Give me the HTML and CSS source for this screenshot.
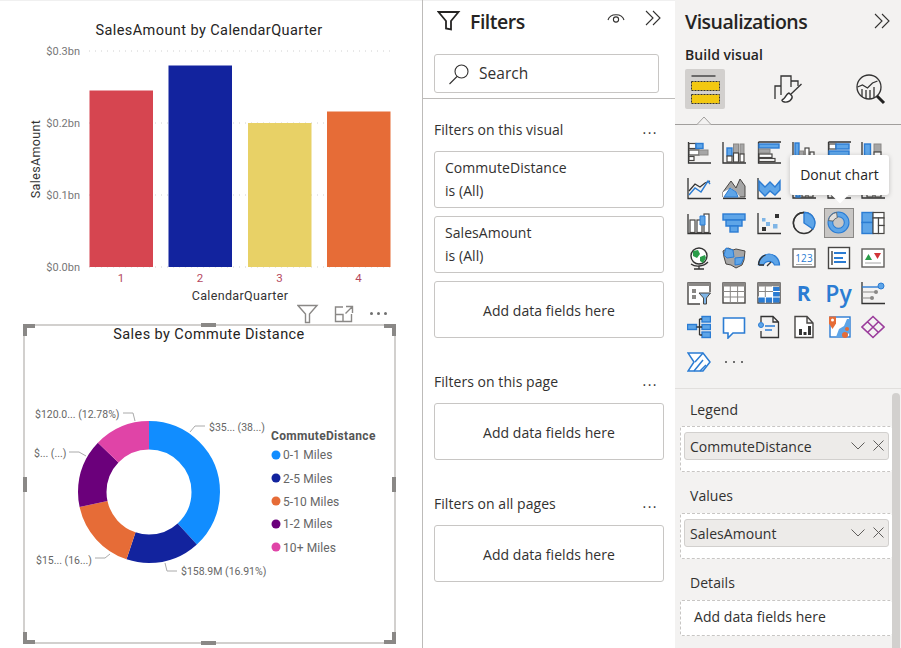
FILE: index.html
```html
<!DOCTYPE html>
<html lang="en">
<head>
    <meta charset="UTF-8">
    <title>Power BI report editor</title>
    <link rel="stylesheet" href="styles.css">
</head>
<body>
<div class="app">
    <!-- report canvas -->
    <div class="report">
        <svg class="chart-bar" viewBox="0 0 422 303" width="422" height="303">
            <text class="chart-title" x="209" y="35" text-anchor="middle">SalesAmount by CalendarQuarter</text>
            <line class="grid-line" x1="89" y1="51" x2="390" y2="51"/>
            <line class="grid-line" x1="89" y1="123" x2="390" y2="123"/>
            <line class="grid-line" x1="89" y1="195" x2="390" y2="195"/>
            <line class="grid-line" x1="89" y1="267" x2="390" y2="267"/>
            <text class="tick" x="80" y="55" text-anchor="end">$0.3bn</text>
            <text class="tick" x="80" y="127" text-anchor="end">$0.2bn</text>
            <text class="tick" x="80" y="199" text-anchor="end">$0.1bn</text>
            <text class="tick" x="80" y="271" text-anchor="end">$0.0bn</text>
            <rect x="89.5" y="90.5" width="63.5" height="176.5" fill="#d64550"/>
            <rect x="168.5" y="65.5" width="63.5" height="201.5" fill="#12239e"/>
            <rect x="248" y="123" width="63.5" height="144" fill="#e8d166"/>
            <rect x="327" y="111.5" width="63.5" height="155.5" fill="#e66c37"/>
            <text class="tick-x" x="121" y="282" text-anchor="middle">1</text>
            <text class="tick-x" x="200" y="282" text-anchor="middle">2</text>
            <text class="tick-x" x="279.5" y="282" text-anchor="middle">3</text>
            <text class="tick-x" x="358.5" y="282" text-anchor="middle">4</text>
            <text class="axis-title" x="240" y="300" text-anchor="middle">CalendarQuarter</text>
            <text class="axis-title" transform="translate(40 159) rotate(-90)" text-anchor="middle">SalesAmount</text>
        </svg>

        <div class="visual-tools">
            <svg width="22" height="20" viewBox="0 0 22 20"><path class="tool-line" d="M1 1.500h19l-7.500 8.500v8.500h-4V10z"/></svg>
            <svg width="20" height="18" viewBox="0 0 20 18"><path class="tool-line" d="M9 2H1.500v14.500h16V9M1.500 9.500H9v7M12 1.500h6.500V8M18.500 1.500L11.500 8.500"/></svg>
            <div class="tool-dots"><i></i><i></i><i></i></div>
        </div>

        <div class="visual">
            <svg class="chart-donut" viewBox="25 326 369 316" width="369" height="316">
                <text class="chart-title" x="209" y="339" text-anchor="middle">Sales by Commute Distance</text>
                <g transform="rotate(-90 149 492)" fill="none" stroke-width="28.5">
                    <circle cx="149" cy="492" r="56.75" pathLength="360" stroke="#118dff" stroke-dasharray="137.6 360"/>
                    <circle cx="149" cy="492" r="56.75" pathLength="360" stroke="#12239e" stroke-dasharray="60.9 360" stroke-dashoffset="-137.6"/>
                    <circle cx="149" cy="492" r="56.75" pathLength="360" stroke="#e66c37" stroke-dasharray="59.2 360" stroke-dashoffset="-198.5"/>
                    <circle cx="149" cy="492" r="56.75" pathLength="360" stroke="#6b007b" stroke-dasharray="56.3 360" stroke-dashoffset="-257.7"/>
                    <circle cx="149" cy="492" r="56.75" pathLength="360" stroke="#e044a7" stroke-dasharray="46 360" stroke-dashoffset="-314"/>
                </g>
                <path class="leader" d="M190 432l5-6h10M135 421l-2-8h-10M86 456l-7-4H69M110 554l-5 4H95M165 563l2 8h10"/>
                <text class="data-label" x="35" y="418">$120.0... (12.78%)</text>
                <text class="data-label" x="34" y="457">$... (...)</text>
                <text class="data-label" x="209" y="431">$35... (38...)</text>
                <text class="data-label" x="36" y="564">$15... (16...)</text>
                <text class="data-label" x="181" y="575">$158.9M (16.91%)</text>
                <text class="legend-title" x="271" y="440">CommuteDistance</text>
                <circle cx="276" cy="455" r="4.5" fill="#118dff"/>
                <text class="legend-item" x="283" y="459">0-1 Miles</text>
                <circle cx="276" cy="478" r="4.5" fill="#12239e"/>
                <text class="legend-item" x="283" y="483">2-5 Miles</text>
                <circle cx="276" cy="501" r="4.5" fill="#e66c37"/>
                <text class="legend-item" x="283" y="506">5-10 Miles</text>
                <circle cx="276" cy="524" r="4.5" fill="#6b007b"/>
                <text class="legend-item" x="283" y="528">1-2 Miles</text>
                <circle cx="276" cy="547" r="4.5" fill="#e044a7"/>
                <text class="legend-item" x="283" y="552">10+ Miles</text>
            </svg>
            <span class="handle corner tl"></span>
            <span class="handle corner tr"></span>
            <span class="handle corner bl"></span>
            <span class="handle corner br"></span>
            <span class="handle mid-h top"></span>
            <span class="handle mid-h bottom"></span>
            <span class="handle mid-v left"></span>
            <span class="handle mid-v right"></span>
        </div>
    </div>

    <!-- filters pane -->
    <div class="filters">
        <div class="filters-head">
            <svg width="24" height="24" viewBox="0 0 24 24"><path class="head-line" d="M1.500 3h20L14 12v8.500l-5-1V12z"/></svg>
            <h2>Filters</h2>
            <svg class="eye" width="18" height="14" viewBox="0 0 18 14"><path class="thin-line" d="M1 9c2-7 14-7 16 0"/><circle class="thin-line" cx="9" cy="8.500" r="2.600"/></svg>
            <svg class="chev" width="17" height="16" viewBox="0 0 17 16"><path class="thin-line" d="M1 1l7 7-7 7M8 1l7 7-7 7"/></svg>
        </div>
        <div class="search">
            <svg width="22" height="22" viewBox="0 0 22 22"><circle class="thin-line" cx="13.500" cy="8.500" r="6.500"/><path class="thin-line" d="M9 13.500L1.500 21"/></svg>
            <span>Search</span>
        </div>
        <div class="filters-rule"></div>

        <div class="section-head first"><span>Filters on this visual</span><span class="more">...</span></div>
        <div class="filter-card"><span>CommuteDistance</span><span>is (All)</span></div>
        <div class="filter-card"><span>SalesAmount</span><span>is (All)</span></div>
        <div class="filter-card add">Add data fields here</div>

        <div class="section-head"><span>Filters on this page</span><span class="more">...</span></div>
        <div class="filter-card add">Add data fields here</div>

        <div class="section-head"><span>Filters on all pages</span><span class="more">...</span></div>
        <div class="filter-card add">Add data fields here</div>
    </div>

    <!-- visualizations pane -->
    <div class="viz">
        <div class="viz-head">
            <h2>Visualizations</h2>
            <svg width="17" height="16" viewBox="0 0 17 16"><path class="thin-line" d="M1 1l7 7-7 7M8 1l7 7-7 7"/></svg>
        </div>
        <div class="build-label">Build visual</div>
        <div class="build-tabs">
            <div class="tab active">
                <svg width="32" height="32" viewBox="0 0 32 32">
                    <path class="dark" d="M2.500 3h24"/>
                    <rect x="2.500" y="8.500" width="28" height="9" fill="#f2c811" stroke="#333" stroke-dasharray="2 1"/>
                    <rect x="2.500" y="21.500" width="28" height="9" fill="#f2c811" stroke="#333" stroke-dasharray="2 1"/>
                </svg>
            </div>
            <div class="tab">
                <svg width="30" height="32" viewBox="0 0 30 32">
                    <path class="dark" d="M2 26V13h6v9M8 13V3h10v11M18 8h7v5"/>
                    <path class="dark" d="M28.500 11L17 22"/>
                    <path d="M16 20c-3 1-3 4-5 5.500s-3 2-1 3c5 2 10-2 9-5.500z" fill="#fff" stroke="#333" stroke-width="1.400"/>
                </svg>
            </div>
            <div class="tab">
                <svg width="32" height="32" viewBox="0 0 32 32">
                    <circle class="dark" cx="14" cy="14" r="12"/>
                    <path class="dark" d="M2.500 14l5-2 5 3 5-5 5-2M7 16v8M11 17v9M15 17v9M19 14v11"/>
                    <path d="M22 23l7 7" stroke="#222" stroke-width="3" fill="none"/>
                </svg>
            </div>
        </div>
        <div class="tabs-rule"><svg width="22" height="9" viewBox="0 0 22 9"><path d="M0 8.500h4l7-7.500 7 7.500h4" fill="#f3f2f1" stroke="#a19f9d"/></svg></div>

        <div class="viz-grid">
            <!-- row 1 -->
            <div class="cell"><svg viewBox="0 0 24 24"><path class="dark" d="M1.500 1v21H24"/><rect class="wht" x="2" y="2.500" width="7" height="5"/><rect class="blu" x="9" y="2.500" width="7" height="5"/><rect class="wht" x="2" y="9" width="10" height="5"/><rect class="gry" x="12" y="9" width="9" height="5"/><rect class="wht" x="2" y="15.500" width="5" height="4"/></svg></div>
            <div class="cell"><svg viewBox="0 0 24 24"><path class="dark" d="M1 1v21h23"/><rect class="blu" x="5" y="7" width="5" height="8"/><rect class="wht" x="5" y="15" width="5" height="6"/><rect class="gry" x="11.500" y="3" width="5" height="9"/><rect class="wht" x="11.500" y="12" width="5" height="9"/><rect class="gry" x="18" y="3" width="4" height="10"/><rect class="wht" x="18" y="13" width="4" height="8"/></svg></div>
            <div class="cell"><svg viewBox="0 0 24 24"><path class="dark" d="M1.500 1v21H24M1.500 1H24"/><rect class="blu" x="2" y="3" width="20" height="4"/><rect class="gry" x="2" y="8" width="11" height="4"/><rect class="wht" x="2" y="13" width="13" height="3.500"/><rect class="wht" x="2" y="17.500" width="16" height="3"/></svg></div>
            <div class="cell"><svg viewBox="0 0 24 24"><path class="dark" d="M1 1v21h23"/><rect class="blu" x="3" y="2" width="4" height="19"/><rect class="gry" x="7.500" y="10" width="4" height="11"/><rect class="wht" x="13" y="7" width="4" height="14"/><rect class="wht" x="18" y="11" width="4" height="10"/></svg></div>
            <div class="cell"><svg viewBox="0 0 24 24"><path class="dark" d="M1.500 1v21M1.500 1H24"/><rect class="wht" x="2" y="3" width="7" height="5"/><rect class="blu" x="9" y="3" width="13" height="5"/><rect class="blu" x="2" y="10" width="20" height="5"/></svg></div>
            <div class="cell"><svg viewBox="0 0 24 24"><path class="dark" d="M1 1v21h23"/><rect class="blu" x="3.500" y="3" width="6" height="18"/><rect class="gry" x="13" y="3" width="7" height="8"/><rect class="wht" x="13" y="11" width="7" height="10"/></svg></div>
            <!-- row 2 -->
            <div class="cell"><svg viewBox="0 0 24 24"><path class="dark" d="M1 2v20.500h23"/><path class="dark" d="M2 15l6-7 5 3 5-4 5-2"/><path class="line-b" d="M2 19l6-7 6 4 7-11 2 3"/></svg></div>
            <div class="cell"><svg viewBox="0 0 24 24"><path class="dark" d="M1 22.500h23"/><path d="M1 21V16L9 5l5 7 4-9 5 7v11z" fill="#a6a6a6" stroke="#484644"/><path d="M1 21V16l8-4 5 4 4 5z" fill="#fff"/><path d="M2 21l6-9 6 4 2 5z" fill="#5ea5e8" stroke="#2b7cd3"/></svg></div>
            <div class="cell"><svg viewBox="0 0 24 24"><path class="dark" d="M1 2v20.500h23"/><path d="M2 5l6 6 5-5 5 5 5-6v9l-5 5-5-4-5 5-6-6z" fill="#5ea5e8" stroke="#2b7cd3" stroke-width="1.400"/></svg></div>
            <div class="cell"><svg viewBox="0 0 24 24"><path class="dark" d="M1 1v21h23"/><rect class="blu" x="4" y="14" width="4" height="7"/><rect class="wht" x="10" y="16" width="4" height="5"/><rect class="wht" x="16" y="15" width="5" height="6"/></svg></div>
            <div class="cell"><svg viewBox="0 0 24 24"><path class="dark" d="M1 1v21h23"/><rect class="wht" x="5" y="16" width="5" height="5"/><rect class="gry" x="14" y="17" width="5" height="4"/></svg></div>
            <div class="cell"><svg viewBox="0 0 24 24"><path class="dark" d="M1 1v21h23"/><rect class="wht" x="6" y="16" width="6" height="5"/><rect class="wht" x="14" y="16" width="6" height="5"/></svg></div>
            <!-- row 3 -->
            <div class="cell"><svg viewBox="0 0 24 24"><path class="dark" d="M1 3v19.500h23"/><rect class="wht" x="3" y="9" width="5" height="12.500"/><rect class="wht" x="10" y="9" width="5" height="12.500"/><rect class="wht" x="17" y="3" width="5" height="18.500"/><path d="M13 14V5h5v9z" fill="#5ea5e8" stroke="#2b7cd3"/></svg></div>
            <div class="cell"><svg viewBox="0 0 24 24"><rect class="blu" x="1" y="3" width="22" height="6"/><path class="blu" d="M4 9h16v6H4z"/><rect class="blu" x="8" y="15" width="8" height="6"/></svg></div>
            <div class="cell"><svg viewBox="0 0 24 24"><path class="dark" d="M1 2v20.500h23"/><rect x="18" y="3" width="4" height="4" fill="#333"/><rect x="5" y="7" width="3.500" height="3.500" fill="#7fb5e6"/><rect x="9" y="11" width="4" height="4" fill="#7fb5e6"/><rect x="16" y="13" width="4.500" height="4.500" fill="#7fb5e6"/><rect x="5" y="16" width="4" height="4" fill="#333"/></svg></div>
            <div class="cell"><svg viewBox="0 0 24 24"><circle class="dark" cx="12" cy="12" r="10.500" fill="#fff"/><path d="M12 12V1.500A10.500 10.500 0 0 1 21 18z" fill="#5ea5e8" stroke="#2b7cd3" stroke-width="1.400"/><path class="dark" d="M12 1.500A10.500 10.500 0 0 0 4 19"/></svg></div>
            <div class="cell selected"><svg viewBox="0 0 24 24"><circle cx="12" cy="12" r="8.500" fill="none" stroke="#2b7cd3" stroke-width="6"/><circle cx="12" cy="12" r="8.500" fill="none" stroke="#5ea5e8" stroke-width="3.800"/><path d="M1.500 10A10.700 10.700 0 0 1 10 1.500L10.700 7A6 6 0 0 0 6.500 10.500z" fill="#e1dfdd" stroke="#605e5c" stroke-width="0.900"/></svg></div>
            <div class="cell"><svg viewBox="0 0 24 24"><rect class="blu" x="1" y="1.500" width="11" height="10"/><rect class="blu" x="1" y="11.500" width="11" height="11"/><rect class="wht" x="12" y="1.500" width="11" height="5.500"/><rect class="wht" x="12" y="7" width="5.500" height="15.500"/><rect class="wht" x="17.500" y="7" width="5.500" height="7.500"/><rect class="wht" x="17.500" y="14.500" width="5.500" height="8"/></svg></div>
            <!-- row 4 -->
            <div class="cell"><svg viewBox="0 0 24 24"><circle cx="12" cy="10" r="8" fill="#fff" stroke="#333" stroke-width="1.400"/><path d="M6 5l5-1 2 4-3 4-4-2zM13 11l5-2 1 3-3 5-3-2z" fill="#2b9d4a"/><path class="dark" d="M4 18c4 3 12 3 17-2M12 20v3M7 23h10"/></svg></div>
            <div class="cell"><svg viewBox="0 0 24 24"><path d="M1 5l5-3 5 2 3-1 9 2-1 9-2 5-6 3-5-3-5-1-2-7z" fill="#a6a6a6" stroke="#484644"/><path d="M4 2l7 2 1 7-7 1-3-3zM13 12l9-1-3 7-6 1z" fill="#5ea5e8" stroke="#2b7cd3"/></svg></div>
            <div class="cell"><svg viewBox="0 0 24 24"><path d="M1.500 19a10.500 11 0 0 1 21 0h-5a6 6 0 0 0-11 0z" fill="#5ea5e8" stroke="#2b7cd3" stroke-width="1.200"/><path class="dark" d="M1.500 19a10.500 11 0 0 1 7-10M7 19h-5M14 16l-4 4"/></svg></div>
            <div class="cell"><svg viewBox="0 0 24 24"><rect x="1" y="3" width="22" height="18" fill="#fff" stroke="#605e5c" stroke-width="1.400"/><text class="icon-num" x="12" y="16" text-anchor="middle">123</text><path d="M4 18.500h16" stroke="#a6a6a6"/></svg></div>
            <div class="cell"><svg viewBox="0 0 24 24"><rect x="1.500" y="1.500" width="21" height="21" fill="#fff" stroke="#484644" stroke-width="1.400"/><path class="dark" d="M5 5v14"/><path class="line-b wide" d="M7 7h12M7 12h9M7 16h12"/></svg></div>
            <div class="cell"><svg viewBox="0 0 24 24"><rect x="1" y="3" width="22" height="18" fill="#fff" stroke="#605e5c" stroke-width="1.400"/><path d="M4 14l3.500-6 3.500 6z" fill="#2b9d4a"/><path d="M13 7h7l-3.500 6z" fill="#d13438"/><path d="M4 17h16" stroke="#a6a6a6"/></svg></div>
            <!-- row 5 -->
            <div class="cell"><svg viewBox="0 0 24 24"><path d="M23 11V2H1v21h12" fill="#fff" stroke="#484644" stroke-width="1.400"/><rect x="1" y="2" width="22" height="3" fill="#8a8886"/><rect x="5" y="8" width="4" height="4" fill="#8a8886"/><rect x="5" y="14" width="4" height="4" fill="#8a8886"/><path d="M12 12h11.500l-4 5v6h-3v-6z" fill="#7fb5e6" stroke="#484644"/></svg></div>
            <div class="cell"><svg viewBox="0 0 24 24"><rect x="1" y="2" width="22" height="20" fill="#fff" stroke="#484644" stroke-width="1.400"/><rect x="1" y="2" width="22" height="3.500" fill="#8a8886"/><path d="M8.300 5v17M15.600 5v17M1 10.500h22M1 16h22" stroke="#8a8886" fill="none"/></svg></div>
            <div class="cell"><svg viewBox="0 0 24 24"><rect x="1" y="2" width="22" height="20" fill="#fff" stroke="#484644" stroke-width="1.400"/><rect x="1" y="2" width="22" height="3.500" fill="#8a8886"/><rect x="1.500" y="16" width="21" height="5.500" fill="#2b7cd3"/><rect x="16" y="6" width="6.500" height="10" fill="#2b7cd3"/><path d="M8.300 5v17M15.600 5v17M1 10.500h22M1 16h22" stroke="#fff" fill="none"/><path d="M8.300 5v11M1 10.500h15" stroke="#8a8886" fill="none"/></svg></div>
            <div class="cell"><span class="glyph-r">R</span></div>
            <div class="cell"><span class="glyph-py">Py</span></div>
            <div class="cell"><svg viewBox="0 0 24 24"><path class="dark" d="M1 1v21.500h23"/><path class="line-g" d="M1 11h13M1 17h9"/><path class="line-b" d="M1 6h17"/><circle cx="20" cy="5" r="3" fill="#5ea5e8" stroke="#2b7cd3"/><circle cx="15" cy="11" r="2" fill="#8a8886"/><circle cx="11" cy="17" r="2" fill="#8a8886"/></svg></div>
            <!-- row 6 -->
            <div class="cell"><svg viewBox="0 0 24 24"><rect class="blu" x="0.500" y="9.500" width="9" height="5"/><rect class="blu" x="15" y="1.500" width="8.500" height="5.500"/><rect class="blu" x="15" y="9.500" width="8.500" height="5"/><rect class="blu" x="15" y="17" width="8.500" height="5.500"/><path class="dark" d="M9.500 12H15M12.500 4v16M12.500 4H15M12.500 20H15"/></svg></div>
            <div class="cell"><svg viewBox="0 0 24 24"><path d="M1.500 3h21v15H11l-5 5v-5H1.500z" fill="#fff" stroke="#2b7cd3" stroke-width="1.600"/></svg></div>
            <div class="cell"><svg viewBox="0 0 24 24"><path class="dark" d="M4 7V1.500h12L21.500 7v15.500H4V16M16 1.500V7h5.500"/><circle cx="4" cy="10" r="2.500" fill="#5ea5e8" stroke="#2b7cd3"/><path class="line-b" d="M8 11h10M8 15h7"/></svg></div>
            <div class="cell"><svg viewBox="0 0 24 24"><path d="M3 1.500h12L21 8v14.500H3zM15 1.500V8h6" fill="#fff" stroke="#484644" stroke-width="1.400"/><path d="M7 14h3v6H7zM11.500 17h3v3h-3zM16 11h3v9h-3z" fill="#333"/></svg></div>
            <div class="cell"><svg viewBox="0 0 24 24"><rect x="3" y="2" width="20" height="20" fill="#fff" stroke="#2b7cd3" stroke-width="1.400"/><path d="M9 22l3-8 5-3 3-7h3v13l-5 5z" fill="#5ea5e8"/><path d="M2 1.500h7v7L5.500 14 2 8.500z" fill="#e66c37"/><circle cx="5.500" cy="5" r="1.500" fill="#fff"/><circle cx="20" cy="14" r="2" fill="#e66c37"/><circle cx="18" cy="20" r="3" fill="#e66c37"/></svg></div>
            <div class="cell"><svg viewBox="0 0 24 24"><path d="M12 1.500L23 12 12 22.500 1 12zM6.500 6.800l11 10.700M17.500 6.800l-11 10.700" fill="none" stroke="#9b3d9c" stroke-width="1.600"/></svg></div>
            <!-- row 7 -->
            <div class="cell"><svg viewBox="0 0 24 24"><path d="M1 3h15l7 9-7 9H1l6-9z" fill="#fff" stroke="#2b7cd3" stroke-width="1.500"/><path d="M8 12L16 3M7 21l9-11M13 21l6-6" fill="none" stroke="#2b7cd3" stroke-width="1.500"/></svg></div>
            <div class="cell"><div class="tool-dots small"><i></i><i></i><i></i></div></div>
        </div>

        <div class="tooltip">Donut chart</div>

        <div class="fields">
            <div class="field-label">Legend</div>
            <div class="well">
                <div class="pill">
                    <span>CommuteDistance</span>
                    <svg width="14" height="8" viewBox="0 0 14 8"><path class="pill-line" d="M.5.5L7 7 13.500.5"/></svg>
                    <svg width="11" height="11" viewBox="0 0 11 11"><path class="pill-line" d="M.5.5l10 10M10.500.5l-10 10"/></svg>
                </div>
            </div>
            <div class="field-label">Values</div>
            <div class="well">
                <div class="pill">
                    <span>SalesAmount</span>
                    <svg width="14" height="8" viewBox="0 0 14 8"><path class="pill-line" d="M.5.5L7 7 13.500.5"/></svg>
                    <svg width="11" height="11" viewBox="0 0 11 11"><path class="pill-line" d="M.5.5l10 10M10.500.5l-10 10"/></svg>
                </div>
            </div>
            <div class="field-label">Details</div>
            <div class="well empty">Add data fields here</div>
            <div class="scroll-thumb"></div>
        </div>
    </div>
</div>
</body>
</html>
```

FILE: styles.css
```css
* {
    box-sizing: border-box;
}
html, body {
    margin: 0;
    height: 648px;
    overflow: hidden;
}
body {
    font-family: "Open Sans", "Noto Sans", sans-serif;
    font-size: 14px;
    letter-spacing: 0.05px;
    color: #323130;
    background-color: #fff;
}
.app {
    display: flex;
    width: 901px;
    height: 648px;
    box-shadow: inset 0 1px 0 #f0f0f0;
}
h2 {
    margin: 0;
    font-size: 19.5px;
    font-weight: 600;
    letter-spacing: -0.5px;
    color: #252423;
}
svg {
    display: block;
}

/* report canvas */
.report {
    width: 422px;
    flex: none;
}
.chart-bar text, .chart-donut text {
    font-family: Roboto, "Liberation Sans", sans-serif;
    letter-spacing: 0;
}
.chart-bar .chart-title, .chart-donut .chart-title {
    font-size: 14.5px;
    letter-spacing: 0.42px;
    fill: #252423;
}
.grid-line {
    stroke: #d0d0d0;
    stroke-dasharray: 1 5;
}
.chart-bar .tick {
    font-size: 11px;
    fill: #777;
}
.chart-bar .tick-x {
    font-size: 11.5px;
    fill: #b5485e;
}
.chart-bar .axis-title {
    font-size: 12.5px;
    letter-spacing: 0.35px;
    fill: #333;
}
.visual-tools {
    display: flex;
    align-items: center;
    justify-content: flex-end;
    gap: 15px;
    height: 21px;
    padding-right: 34px;
}
.tool-line {
    fill: none;
    stroke: #8a8886;
    stroke-width: 1.4;
}
.tool-dots {
    display: flex;
    gap: 4px;
    width: 19px;
    justify-content: center;
}
.tool-dots i {
    width: 3px;
    height: 3px;
    border-radius: 50%;
    background-color: #707070;
}
.tool-dots.small i {
    background-color: #444;
    width: 2px;
    height: 2px;
}
.tool-dots.small {
    gap: 6px;
    width: 24px;
}
.visual {
    position: relative;
    width: 373px;
    height: 320px;
    margin-left: 23px;
    border: 2px solid #d2d0ce;
}
.chart-donut .data-label {
    font-size: 10.5px;
    fill: #666;
}
.leader {
    fill: none;
    stroke: #aaa;
}
.chart-donut .legend-title {
    font-size: 12px;
    font-weight: 700;
    letter-spacing: 0.33px;
    fill: #555;
}
.chart-donut .legend-item {
    font-size: 12px;
    letter-spacing: 0.1px;
    fill: #666;
}
.handle {
    position: absolute;
}
.corner {
    width: 12px;
    height: 12px;
    border: 0 solid #8a8886;
}
.corner.tl { top: -2px; left: -2px; border-width: 4px 0 0 4px; }
.corner.tr { top: -2px; right: -2px; border-width: 4px 4px 0 0; }
.corner.bl { bottom: -2px; left: -2px; border-width: 0 0 4px 4px; }
.corner.br { bottom: -2px; right: -2px; border-width: 0 4px 4px 0; }
.mid-h {
    left: 176px;
    width: 15px;
    height: 4px;
    background-color: #8a8886;
}
.mid-h.top { top: -3px; }
.mid-h.bottom { bottom: -3px; }
.mid-v {
    top: 151px;
    width: 4px;
    height: 15px;
    background-color: #8a8886;
}
.mid-v.left { left: -2px; }
.mid-v.right { right: -2px; }

/* filters pane */
.filters {
    width: 253px;
    flex: none;
    border-left: 1px solid #bdbbb9;
    height: 100%;
}
.filters-head {
    display: flex;
    align-items: center;
    height: 42px;
    padding: 0 13px 0 14px;
}
.filters-head h2 {
    margin-left: 9px;
    flex: 1;
}
.filters-head .eye {
    margin-right: 20px;
    margin-top: -6px;
}
.filters-head .chev {
    margin-top: -6px;
}
.head-line {
    fill: none;
    stroke: #252423;
    stroke-width: 1.8;
}
.thin-line {
    fill: none;
    stroke: #323130;
    stroke-width: 1.1;
}
.pill-line {
    fill: none;
    stroke: #605e5c;
    stroke-width: 1;
}
.search {
    display: flex;
    align-items: center;
    gap: 9px;
    width: 225px;
    height: 39px;
    margin: 12px 0 0 11px;
    padding-left: 13px;
    border: 1px solid #c8c6c4;
    border-radius: 3px;
    font-size: 15.5px;
}
.search span {
    margin-top: -1px;
}
.filters-rule {
    height: 1px;
    margin-top: 5px;
    background-color: #bdbbb9;
}
.section-head {
    display: flex;
    justify-content: space-between;
    align-items: center;
    width: 230px;
    height: 20px;
    margin: 33px 0 12px 11px;
    padding-right: 6px;
}
.section-head.first {
    margin-top: 20px;
}
.more {
    margin-top: -1px;
    letter-spacing: 1.5px;
}
.filter-card {
    display: flex;
    flex-direction: column;
    width: 230px;
    height: 57px;
    margin: 0 0 8px 11px;
    padding: 4px 10px;
    border: 1px solid #c8c6c4;
    border-radius: 3px;
    line-height: 23px;
}
.filter-card.add {
    align-items: center;
    justify-content: center;
    padding-top: 5px;
}

/* visualizations pane */
.viz {
    position: relative;
    flex: 1;
    min-width: 0;
    height: 100%;
    background-color: #f3f2f1;
}
.viz-head {
    display: flex;
    align-items: center;
    justify-content: space-between;
    height: 42px;
    padding: 0 10px 0 10px;
}
.build-label {
    margin: 3px 0 0 10px;
    line-height: 20px;
    font-weight: 600;
    color: #252423;
}
.build-tabs {
    display: flex;
    justify-content: space-between;
    height: 40px;
    margin: 4px 0 0 10px;
    padding-right: 10px;
    width: 216px;
}
.tab {
    display: flex;
    align-items: center;
    justify-content: center;
    width: 40px;
    height: 40px;
    border-radius: 2px;
}
.tab.active {
    background-color: #d2d0ce;
}
.dark {
    fill: none;
    stroke: #333;
    stroke-width: 1.3;
}
.tabs-rule {
    position: relative;
    height: 1px;
    margin-top: 15px;
    background-color: #a19f9d;
}
.tabs-rule svg {
    position: absolute;
    left: 18px;
    top: -8px;
}
.viz-grid {
    display: grid;
    grid-template-columns: repeat(6, 34.8px);
    grid-auto-rows: 34.8px;
    margin: 11px 0 0 7px;
}
.cell {
    display: flex;
    align-items: center;
    justify-content: center;
}
.cell svg {
    width: 24px;
    height: 24px;
}
.cell.selected {
    margin: 3.4px;
    background-color: #c8c6c4;
    outline: 1px solid #8a8886;
}
.cell.selected svg {
    width: 23px;
    height: 23px;
    flex: none;
}
.blu {
    fill: #5ea5e8;
    stroke: #2b7cd3;
    stroke-width: 1.4;
}
.wht {
    fill: #fff;
    stroke: #484644;
    stroke-width: 1.2;
}
.gry {
    fill: #a6a6a6;
    stroke: #8a8886;
}
.line-b {
    fill: none;
    stroke: #2b7cd3;
    stroke-width: 1.4;
}
.line-b.wide {
    stroke-width: 2;
}
.line-g {
    fill: none;
    stroke: #8a8886;
    stroke-width: 1.2;
}
.icon-num {
    font-size: 10px;
    fill: #2b7cd3;
}
.glyph-r {
    font-size: 21px;
    font-weight: 700;
    color: #2b7cd3;
}
.glyph-py {
    font-size: 23px;
    font-weight: 600;
    color: #2b7cd3;
}
.tooltip {
    position: absolute;
    left: 115px;
    top: 155px;
    width: 99px;
    height: 40px;
    line-height: 40px;
    text-align: center;
    background-color: #fff;
    border-radius: 3px;
    box-shadow: 0 1px 5px rgba(0, 0, 0, 0.22);
    color: #252423;
}
.tooltip::after {
    content: "";
    position: absolute;
    left: 44px;
    bottom: -6px;
    width: 12px;
    height: 12px;
    background-color: #fff;
    transform: rotate(45deg);
}
.fields {
    position: relative;
    margin-top: 8px;
    border-top: 1px solid #e1dfdd;
    padding: 11px 9px 0 5px;
}
.field-label {
    margin: 14px 0 7px 10px;
    line-height: 20px;
}
.field-label:first-child {
    margin-top: 0;
    margin-bottom: 6px;
}
.well {
    height: 46px;
    padding: 5px 3px;
    border: 1px dashed #c8c6c4;
    border-right: none;
    border-radius: 2px;
    background-color: #fff;
}
.well.empty {
    height: 36px;
    line-height: 32px;
    padding: 0 0 0 13px;
}
.pill {
    display: flex;
    align-items: center;
    gap: 8px;
    height: 28px;
    padding: 0 4px 0 5px;
    border: 1px solid #d2d0ce;
    border-radius: 3px;
    background-color: #edebe9;
    font-size: 14px;
}
.pill span {
    flex: 1;
    margin-top: 1px;
}
.scroll-thumb {
    position: absolute;
    right: 1px;
    top: 4px;
    width: 8px;
    height: 260px;
    border-radius: 4px;
    background-color: #d2d0ce;
}
```
